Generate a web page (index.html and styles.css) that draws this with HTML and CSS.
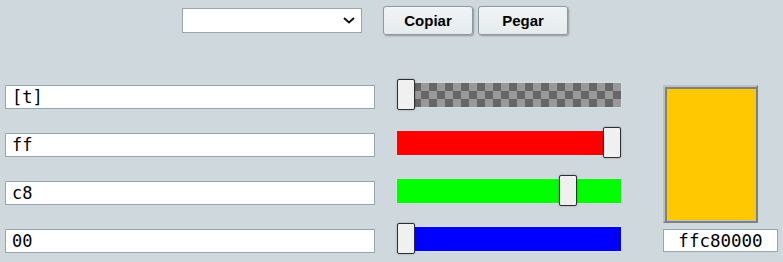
FILE: index.html
```html
<!DOCTYPE html>
<html lang="es">
<head>
  <meta charset="UTF-8">
  <meta name="viewport" content="width=device-width, initial-scale=1.0">
  <title>Selector de color</title>
  <link rel="stylesheet" href="styles.css">
</head>
<body>
  <div class="toolbar">
    <div class="select-wrap">
      <select class="preset">
        <option></option>
      </select>
      <svg class="chevron" width="12" height="7" viewBox="0 0 12 7">
        <path d="M1 1 L6 5.5 L11 1" fill="none" stroke="#111" stroke-width="2"/>
      </svg>
    </div>
    <div class="buttons">
      <button type="button" class="btn">Copiar</button>
      <button type="button" class="btn">Pegar</button>
    </div>
  </div>

  <div class="editor">
    <input type="text" class="field" value="[t]">
    <input type="range" class="slider slider-alpha" min="0" max="255" value="0">
    <div class="swatch"></div>

    <input type="text" class="field" value="ff">
    <input type="range" class="slider slider-red" min="0" max="255" value="255">

    <input type="text" class="field" value="c8">
    <input type="range" class="slider slider-green" min="0" max="255" value="200">

    <input type="text" class="field" value="00">
    <input type="range" class="slider slider-blue" min="0" max="255" value="0">
    <input type="text" class="field hex" value="ffc80000">
  </div>
</body>
</html>
```

FILE: styles.css
```css
body {
  background-color: #cfd8dd;
  color: #000;
  font-family: "Liberation Sans", Arial, sans-serif;
  margin: 0;
  padding-top: 6px;
}

.toolbar {
  display: flex;
  align-items: center;
  padding-left: 182px;
  gap: 21px;
}

.select-wrap {
  position: relative;
  width: 180px;
  height: 25px;
}

.preset {
  -webkit-appearance: none;
  appearance: none;
  width: 100%;
  height: 100%;
  margin: 0;
  border: 1px solid #97a6ad;
  border-radius: 0;
  background-color: #fff;
}

.chevron {
  position: absolute;
  left: 161px;
  top: 9px;
  pointer-events: none;
}

.buttons {
  display: flex;
  gap: 5px;
}

.btn {
  width: 90px;
  height: 29px;
  margin: 0;
  padding: 0;
  border: 1px solid #8e9aa1;
  border-radius: 3px;
  background: linear-gradient(#f1f4f6, #e6ebee);
  box-shadow: 1px 1px 2px rgba(0, 0, 0, 0.3);
  font-family: "Liberation Sans", Arial, sans-serif;
  font-weight: bold;
  font-size: 15px;
  color: #000;
  cursor: pointer;
}

.editor {
  display: grid;
  grid-template-columns: 370px 224px 115px;
  grid-auto-rows: 48px;
  column-gap: 22px;
  margin-top: 44px;
  padding-left: 5px;
}

.field {
  box-sizing: border-box;
  width: 370px;
  height: 24px;
  margin: 6px 0 0;
  padding: 0 6px;
  border: 1px solid #97a6ad;
  border-radius: 0;
  background: #fff;
  font-family: "DejaVu Sans Mono", monospace;
  font-size: 17px;
  color: #000;
  outline: none;
}

.field.hex {
  grid-column: 3;
  width: 115px;
  height: 23px;
  margin-left: 20px;
  text-align: center;
  font-size: 17.5px;
}

.slider {
  -webkit-appearance: none;
  appearance: none;
  width: 224px;
  height: 31px;
  margin: 0;
  background: transparent;
}

.slider::-webkit-slider-runnable-track {
  height: 24px;
  box-shadow: 0 0 1px rgba(255, 255, 255, 0.6);
}

.slider::-webkit-slider-thumb {
  -webkit-appearance: none;
  appearance: none;
  box-sizing: border-box;
  width: 18px;
  height: 31px;
  margin-top: -3.5px;
  background: #f0f0f0;
  border: 1px solid #2f2f2f;
  border-radius: 2px;
  box-shadow: 0 0 2px rgba(0, 0, 0, 0.35);
}

.slider-alpha::-webkit-slider-runnable-track {
  background: conic-gradient(#999 0 25%, #666 0 50%, #999 0 75%, #666 0) 0 0 / 16px 16px;
}

.slider-red::-webkit-slider-runnable-track {
  background: #f00;
}

.slider-green::-webkit-slider-runnable-track {
  background: #0f0;
}

.slider-blue::-webkit-slider-runnable-track {
  background: #00f;
}

.swatch {
  grid-column: 3;
  grid-row: 1 / span 3;
  box-sizing: border-box;
  height: 138px;
  margin: 6px 0 0 20px;
  border: 2px solid;
  border-color: #bcc1c4 #808080 #808080 #bcc1c4;
  box-shadow: inset 2px 2px 0 #808080, inset -1px -1px 0 #bcc1c4;
  background: #ffc800;
}
```
